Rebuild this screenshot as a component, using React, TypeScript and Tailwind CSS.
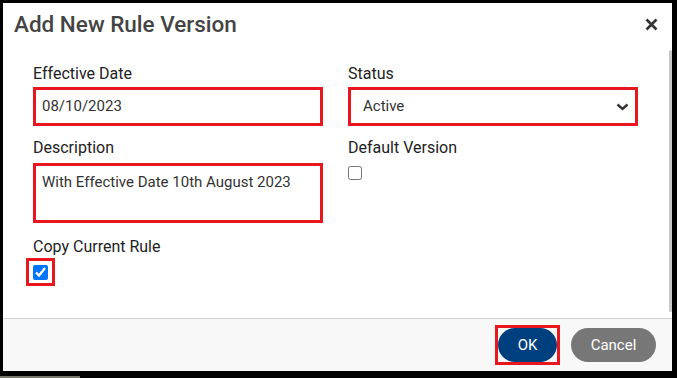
import React from "react";

const RED = "border-[#e8161f]";

function Label({ children }: { children: React.ReactNode }) {
  return <div className="text-[16px] leading-[20px] text-[#222]">{children}</div>;
}

export default function App() {
  return (
    <div
      className="relative w-[677px] h-[378px] bg-black pt-[3px] pl-[3px] pr-[5px] pb-[7px] flex"
      style={{ fontFamily: "Roboto, 'Liberation Sans', sans-serif" }}
    >
      <div className="relative flex-1 flex flex-col bg-white">
        {/* header */}
        <div className="h-[45px] flex items-center justify-between pl-[11px] pr-[14px]">
          <div className="mt-[-4px] text-[22.5px] leading-[30px] font-medium text-[#444]">Add New Rule Version</div>
          <svg width="13" height="13" viewBox="0 0 13 13" className="mt-[-3px]">
            <path d="M1.5 1.5 L11.5 11.5 M11.5 1.5 L1.5 11.5" stroke="#333" strokeWidth="2.6" strokeLinecap="butt" />
          </svg>
        </div>

        {/* body */}
        <div className="flex-1 pl-[30px] pt-[16px]">
          <div className="grid grid-cols-[290px_290px] gap-x-[25px]">
            <div>
              <Label>Effective Date</Label>
              <div className={`mt-[3px] h-[39px] border-[3px] ${RED} flex items-center pl-[6px] text-[15px] text-[#333]`}>
                08/10/2023
              </div>
            </div>
            <div>
              <Label>Status</Label>
              <div className={`mt-[3px] h-[39px] border-[3px] ${RED} flex items-center justify-between pl-[12px] pr-[6px] text-[15px] text-[#333]`}>
                <span>Active</span>
                <svg width="13" height="8" viewBox="0 0 13 8">
                  <path d="M1.5 1.5 L6.5 6 L11.5 1.5" stroke="#333" strokeWidth="2.4" fill="none" />
                </svg>
              </div>
            </div>

            <div className="mt-[12px]">
              <Label>Description</Label>
              <div className={`mt-[5px] h-[60px] border-[3px] ${RED} pl-[6px] pt-[6px] text-[15px] leading-[20px] text-[#333]`}>
                With Effective Date 10th August 2023
              </div>
            </div>
            <div className="mt-[12px]">
              <Label>Default Version</Label>
              <div className="mt-[8px] flex">
                <input type="checkbox" className="m-0 w-[14px] h-[14px]" />
              </div>
            </div>

            <div className="mt-[14px]">
              <Label>Copy Current Rule</Label>
              <div className={`mt-[1px] ml-[-7px] w-[29px] h-[28px] border-[3px] ${RED} flex items-center justify-center`}>
                <input type="checkbox" defaultChecked className="m-0 w-[15px] h-[15px]" />
              </div>
            </div>
            <div />
          </div>
        </div>

        {/* footer */}
        <div className="h-[53px] border-t border-[#cfcfcf] bg-[#f8f8f8] flex items-center justify-end pr-[16px] gap-[11px]">
          <div className={`border-[3px] ${RED} p-0 flex`}>
            <div className="h-[34px] w-[59px] rounded-full bg-[#003f7d] text-white text-[15px] flex items-center justify-center">
              OK
            </div>
          </div>
          <div className="h-[34px] w-[85px] rounded-full bg-[#777777] text-white text-[15px] flex items-center justify-center">
            Cancel
          </div>
        </div>

        {/* scrollbar thumb */}
        <div className="absolute right-0 top-[47px] w-[3px] h-[262px] rounded-sm bg-[#c8c8c8]" />
      </div>
      <div className="absolute left-0 bottom-0 w-[80px] h-[2px] bg-[#77776c]" />
    </div>
  );
}
